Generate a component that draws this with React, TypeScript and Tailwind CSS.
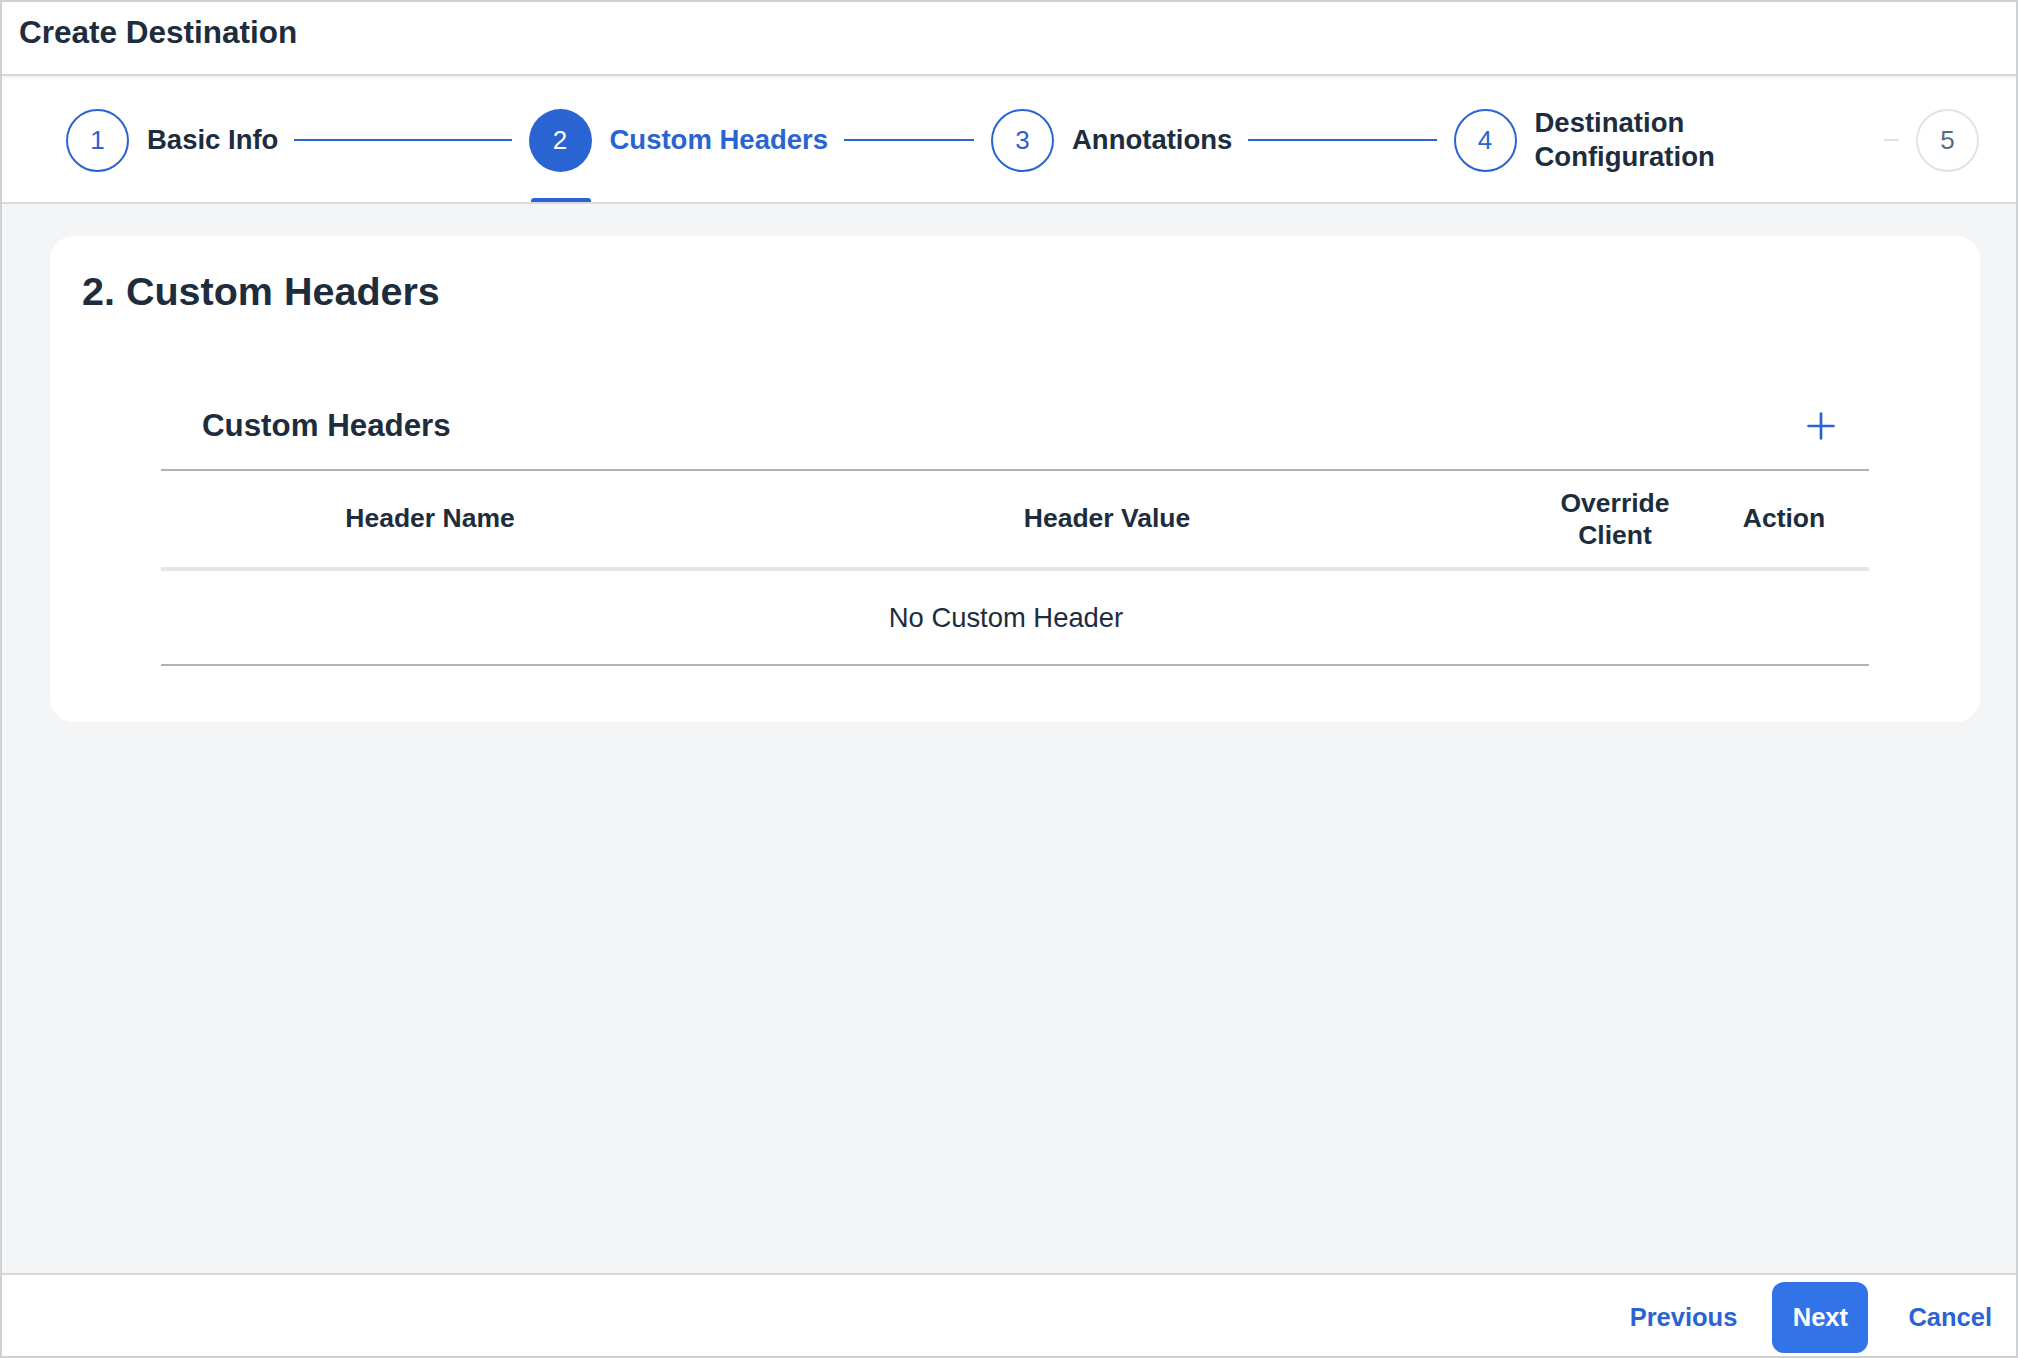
type Step = {
  num: number;
  label: string[];
  state: 'done' | 'active' | 'todo' | 'off';
  lineDone: boolean;
};

const steps: Step[] = [
  { num: 1, label: ['Basic Info'], state: 'done', lineDone: true },
  { num: 2, label: ['Custom Headers'], state: 'active', lineDone: true },
  { num: 3, label: ['Annotations'], state: 'done', lineDone: true },
  { num: 4, label: ['Destination', 'Configuration'], state: 'done', lineDone: false },
];

function StepCircle({ num, state }: { num: number; state: Step['state'] }) {
  if (state === 'active') {
    return (
      <div className="w-[63px] h-[63px] shrink-0 rounded-full bg-[#2a64d2] text-white flex items-center justify-center text-[26px]">
        {num}
      </div>
    );
  }
  if (state === 'off') {
    return (
      <div className="w-[63px] h-[63px] shrink-0 rounded-full border-2 border-[#e1e3e6] text-[#556b82] flex items-center justify-center text-[26px]">
        {num}
      </div>
    );
  }
  return (
    <div className="w-[63px] h-[63px] shrink-0 rounded-full border-2 border-[#2a64d2] text-[#2a64d2] flex items-center justify-center text-[26px]">
      {num}
    </div>
  );
}

function Stepper() {
  return (
    <div className="relative h-[128px] shrink-0 bg-white border-b-2 border-[#d9dadc] flex items-center pt-[2px] pl-[64px] overflow-hidden shadow-[inset_0_4px_4px_-3px_rgba(0,0,0,0.08)]">
      {steps.map(step => (
        <div key={step.num} className="w-[462.5px] shrink-0 flex items-center">
          <StepCircle num={step.num} state={step.state} />
          <div
            className={`ml-[18px] font-bold text-[27.5px] leading-[34px] ${
              step.state === 'active' ? 'text-[#2a64d2]' : 'text-[#1d2d3e]'
            } ${step.label.length > 1 ? 'w-[333px]' : 'whitespace-nowrap'}`}
          >
            {step.label.map(line => (
              <div key={line}>{line}</div>
            ))}
          </div>
          <div
            className={`flex-1 ml-[16px] mr-[17px] h-[2px] ${
              step.lineDone ? 'bg-[#2a64d2]' : 'bg-[#e1e3e6]'
            }`}
          />
        </div>
      ))}
      <StepCircle num={5} state="off" />
      <div className="absolute left-[529px] bottom-[-2px] w-[60px] h-[6px] rounded-t-[3px] bg-[#2a64d2]" />
    </div>
  );
}

function PlusIcon() {
  return (
    <svg width="28" height="28" viewBox="0 0 28 28" fill="none">
      <path d="M14 1.5V26.5M1.5 14H26.5" stroke="#2a64d2" strokeWidth="2.7" strokeLinecap="round" />
    </svg>
  );
}

function HeadersTable() {
  return (
    <div className="mx-[79px]">
      <div className="mt-[68px] h-[86px] flex items-center justify-between pl-[41px] pr-[34px]">
        <div className="font-bold text-[31.3px] text-[#1d2d3e]">Custom Headers</div>
        <PlusIcon />
      </div>

      <div className="border-t-2 border-[#a9b4be]">
        <div className="grid grid-cols-[538px_816px_200px_1fr] h-[100px] items-center text-center font-bold text-[26.5px] text-[#1d2d3e] border-b-4 border-[#e5e5e5]">
          <div>Header Name</div>
          <div>Header Value</div>
          <div className="leading-[32px]">
            Override
            <br />
            Client
          </div>
          <div className="pr-[16px]">Action</div>
        </div>

        <div className="h-[95px] flex items-center justify-center pr-[18px] text-[27.4px] text-[#1d2d3e] border-b-2 border-[#a9b4be]">
          No Custom Header
        </div>
      </div>
    </div>
  );
}

export default function App() {
  return (
    <div className="w-[2018px] h-[1358px] border-2 border-[#cfd0d2] flex flex-col bg-[#f4f5f7] font-['Liberation_Sans',Arial,sans-serif] overflow-hidden">
      <div className="h-[74px] shrink-0 bg-white border-b-2 border-[#d6d7d9] pl-[17px] pt-[12px]">
        <h1 className="font-bold text-[31.5px] leading-[37px] text-[#1d2d3e]">Create Destination</h1>
      </div>

      <Stepper />

      <div className="flex-1 pt-[32px] pl-[48px] pr-[36px]">
        <div className="bg-white rounded-[24px] pt-[32px] px-[32px] pb-[56px]">
          <h2 className="font-bold text-[39.5px] leading-[47px] text-[#1d2d3e]">2. Custom Headers</h2>
          <HeadersTable />
        </div>
      </div>

      <div className="h-[83px] shrink-0 bg-white border-t-2 border-[#d6d7d9] flex items-center justify-end pt-[4px] pr-[24px]">
        <button className="font-bold text-[25.5px] text-[#2a64d2]">Previous</button>
        <button className="ml-[35px] w-[96px] h-[71px] rounded-[12px] bg-[#3373e8] text-white font-bold text-[25.5px]">
          Next
        </button>
        <button className="ml-[40px] font-bold text-[25.5px] text-[#2a64d2]">Cancel</button>
      </div>
    </div>
  );
}
